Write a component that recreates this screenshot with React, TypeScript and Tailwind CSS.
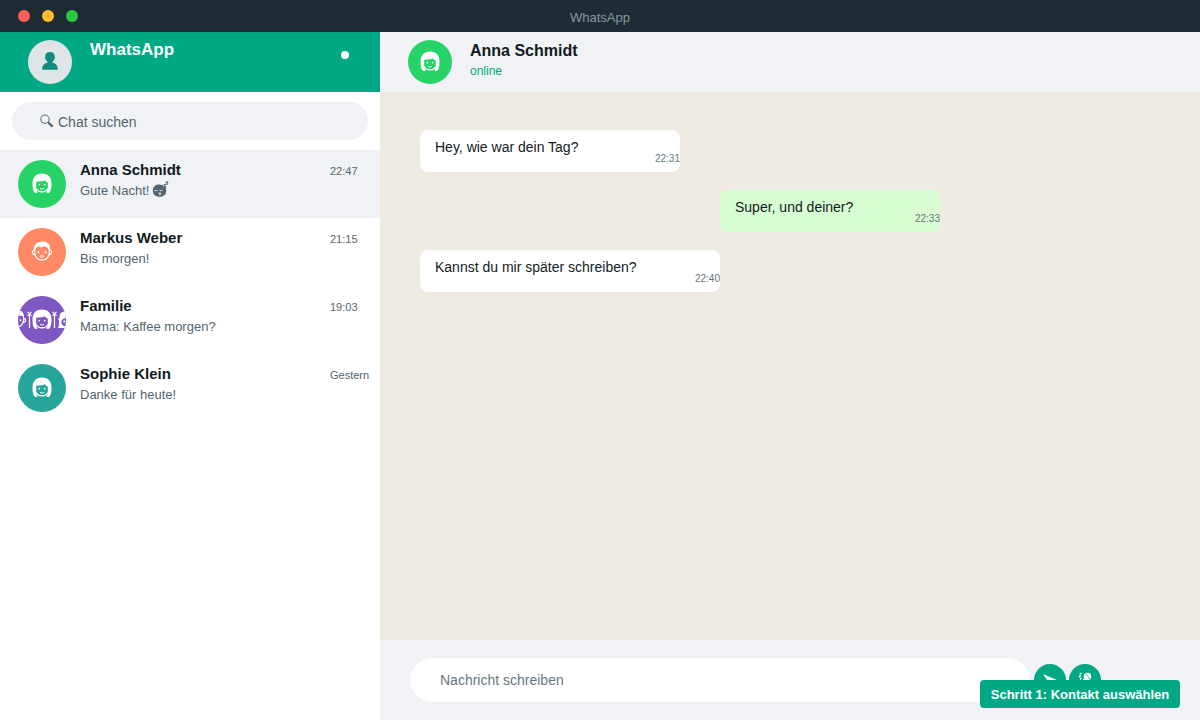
import { useState } from 'react';
import type { ReactNode } from 'react';

interface Chat {
  id: string;
  name: string;
  preview: string;
  time: string;
  color: string;
  face: 'woman' | 'man' | 'family';
  asleep?: boolean;
}

interface Message {
  id: number;
  text: string;
  time: string;
  style: string;
}

const CHATS: Chat[] = [
  { id: 'anna', name: 'Anna Schmidt', preview: 'Gute Nacht!', time: '22:47', color: 'bg-[#25d366]', face: 'woman', asleep: true },
  { id: 'markus', name: 'Markus Weber', preview: 'Bis morgen!', time: '21:15', color: 'bg-[#ff8a65]', face: 'man' },
  { id: 'familie', name: 'Familie', preview: 'Mama: Kaffee morgen?', time: '19:03', color: 'bg-[#7e57c2]', face: 'family' },
  { id: 'sophie', name: 'Sophie Klein', preview: 'Danke für heute!', time: 'Gestern', color: 'bg-[#26a69a]', face: 'woman' },
];

const MESSAGES: Message[] = [
  { id: 1, text: 'Hey, wie war dein Tag?', time: '22:31', style: 'w-[260px] self-start bg-white' },
  { id: 2, text: 'Super, und deiner?', time: '22:33', style: 'w-[220px] self-end bg-[#d9fdd3]' },
  { id: 3, text: 'Kannst du mir später schreiben?', time: '22:40', style: 'w-[300px] self-start bg-white' },
];

// Faces share a 48x48 canvas, the head is centred on 24,24
function WomanShape() {
  return (
    <>
      <path
        fill="currentColor"
        d="M17 33c-1.700-1.500-2.500-4.800-2.500-9 0-6.500 3.300-10.500 9.500-10.500s9.500 4 9.500 10.500c0 4.200-.8 7.500-2.500 9l-2.800-.3c1-1 1.600-3 1.600-5.700v-4.200c-1.400-.4-2.200-1.200-2.600-2.500-2.200 1-5.400 1.400-9 1.500V27c0 2.700.6 4.700 1.600 5.700z"
      />
      <path d="M18.300 28.500c.8 2.400 2.800 3.400 5.700 3.400s4.900-1 5.700-3.400" fill="none" stroke="currentColor" strokeWidth="1.100" />
      <circle cx="21.300" cy="24.600" r="0.900" fill="currentColor" />
      <circle cx="26.700" cy="24.600" r="0.900" fill="currentColor" />
      <path d="M22 28.500q2 1.200 4 0" fill="none" stroke="currentColor" strokeWidth="1" />
    </>
  );
}

function ManShape() {
  return (
    <>
      <path
        fill="currentColor"
        d="M16 24c-1.400-6 1.600-10.300 7.800-10.300 4.800-1.100 9.400 2 8.300 10.300l-1.500-1.500-.9-3c-1.600-.1-2.600-.6-3.400-1.500-1.300 1.200-2.800 1.600-4.400 1.400l.9-1.300c-2.800.3-4.900 1.600-5.300 4z"
      />
      <path
        d="M16.800 23.500c0 5.500 2.800 8.500 7.200 8.500s7.200-3 7.200-8.500M16.500 22.500c-1.500-.3-2.300.8-2 2.200.3 1.500 1.400 2.400 3 2.200M31.500 22.500c1.500-.3 2.300.8 2 2.200-.3 1.500-1.400 2.400-3 2.200"
        fill="none"
        stroke="currentColor"
        strokeWidth="1.100"
      />
      <circle cx="20.500" cy="24" r="1" fill="currentColor" />
      <circle cx="27.500" cy="24" r="1" fill="currentColor" />
      <ellipse cx="24" cy="28.200" rx="1.700" ry="1.100" fill="none" stroke="currentColor" strokeWidth="0.900" />
    </>
  );
}

function JoinerShape() {
  return <path d="M0 18.500V32M-2 15.800l4 4M2 15.800l-4 4" fill="none" stroke="currentColor" strokeWidth="1.200" />;
}

function FamilyShape() {
  return (
    <>
      {/* left neighbour, cut off by the circle */}
      <path fill="currentColor" d="M0 15h3.200c2.300 1.600 3.200 4 2.600 7L4.500 20 0 19.500z" />
      <path
        d="M5.500 21c.8 4.700-1.300 9.300-5.500 10.300M5.800 22.300c2-.2 2.700 4-.3 4"
        fill="none"
        stroke="currentColor"
        strokeWidth="1.200"
      />
      <circle cx="2.500" cy="24.300" r="1" fill="currentColor" />
      <g transform="translate(11.500 0)">
        <JoinerShape />
      </g>
      <WomanShape />
      <g transform="translate(36.500 0)">
        <JoinerShape />
      </g>
      <path
        fill="currentColor"
        d="M48 15.500c-4-.4-7 2-6.300 5.700l-.7 1.300-1.200.3 1.300 1.600c-.3 3 .3 5.200-1.100 7.600h8v-1.600c-3 0-4.700-2-4.700-4.400 0-2.200 1.700-3.800 4.700-4z"
      />
      <circle cx="46.300" cy="25.500" r="1.100" fill="currentColor" />
    </>
  );
}

function Face({ face }: { face: Chat['face'] }) {
  return (
    <svg viewBox="0 0 48 48" className="size-12 shrink-0 text-white" aria-hidden="true">
      {face === 'woman' && <WomanShape />}
      {face === 'man' && <ManShape />}
      {face === 'family' && <FamilyShape />}
    </svg>
  );
}

function SleepingFace() {
  return (
    <svg viewBox="0 0 17 18" className="h-[18px] w-[17px]" aria-label="schlafend" role="img">
      <path
        fill="currentColor"
        fillRule="evenodd"
        d="M7.500 3.500C3.500 3.300.8 5.700.8 9.500c0 3.900 2.500 6.300 6.500 6.300s6.900-2 6.900-6c0-2-.3-3.500-1.200-4.700L11.800 6l-.9-1.800zM2.500 8.800q1.300 1.200 2.700 0l.4.500q-1.800 1.700-3.500 0zM7.700 8.800q1.300 1.200 2.700 0l.4.500q-1.800 1.700-3.500 0zM5.800 11.800h3c.4 1.200-.2 2.600-1.400 2.600l.2-1.500z"
      />
      <path d="M11.300 3.800l2-.5-1 2.500 1.800-.5M13.500 1.300l2.300-.6-1.400 2.700 2-.5" fill="none" stroke="currentColor" strokeWidth="1" />
    </svg>
  );
}

function SearchGlyph() {
  return (
    <svg viewBox="0 0 14 14" className="size-[14px] shrink-0" fill="none" stroke="currentColor" aria-hidden="true">
      <circle cx="5" cy="5.200" r="4.200" strokeWidth="1" />
      <path d="M8 8.200l1.200 1.200" strokeWidth="1.200" />
      <path d="M9.200 9.400l2.900 2.700" strokeWidth="2.200" strokeLinecap="round" />
    </svg>
  );
}

function UserGlyph() {
  return (
    <svg viewBox="0 0 16 20" className="h-5 w-4 text-[#128c7e]" fill="currentColor" aria-hidden="true">
      <path d="M8 0C5 0 3.300 1.600 3.300 4.200c0 .6-.3.900-.3 1.500 0 .7.500 1 .8 1.700.4 1 .9 1.700 1.700 2.300v.9C3 11.800.2 12.300.2 17.700h15.600c0-5.400-2.800-5.900-5.300-7.100v-.9c.8-.6 1.300-1.300 1.700-2.300.3-.7.8-1 .8-1.700 0-.6-.3-.9-.3-1.500C12.700 1.600 11 0 8 0z" />
    </svg>
  );
}

function RoundButton({ label, children }: { label: string; children: ReactNode }) {
  return (
    <button
      type="button"
      aria-label={label}
      className="flex size-8 shrink-0 items-center justify-center rounded-full bg-[#00a884] text-white"
    >
      {children}
    </button>
  );
}

function Sidebar({ activeId, onSelect }: { activeId: string; onSelect: (id: string) => void }) {
  return (
    <aside className="flex w-[380px] shrink-0 flex-col bg-white">
      <header className="flex h-[60px] shrink-0 items-center bg-[#00a884] pr-[31px] pl-7">
        <div className="flex size-11 items-center justify-center rounded-full bg-[#dfe5e7]">
          <UserGlyph />
        </div>
        <h1 className="mb-6 ml-[18px] flex-1 text-[17px] leading-5 font-bold text-white">WhatsApp</h1>
        <button type="button" aria-label="Menü" className="mb-3.5 size-2 rounded-full bg-white" />
      </header>

      <label className="mx-3 my-2.5 flex h-[38px] shrink-0 items-center gap-1 rounded-full bg-[#f0f2f5] pr-4 pl-7 text-[#54656f]">
        <SearchGlyph />
        <input
          type="search"
          aria-label="Chat suchen"
          placeholder="Chat suchen"
          className="h-6 min-w-0 flex-1 bg-transparent pt-0.5 text-sm outline-none placeholder:text-[#54656f]"
        />
      </label>

      <nav className="flex flex-col">
        {CHATS.map(chat => (
          <button
            key={chat.id}
            type="button"
            onClick={() => onSelect(chat.id)}
            className={`flex h-[68px] items-center pl-[18px] text-left ${chat.id === activeId ? 'bg-[#f0f2f5]' : 'bg-white'}`}
          >
            <span className={`flex size-12 shrink-0 overflow-hidden rounded-full ${chat.color}`}>
              <Face face={chat.face} />
            </span>
            <span className="mb-2 ml-[14px] flex min-w-0 flex-1 flex-col">
              <span className="text-[15px] leading-5 font-bold text-[#111b21]">{chat.name}</span>
              <span className="flex h-5 items-center gap-[3px] text-[13px] leading-5 text-[#54656f]">
                <span className="pt-0.5">{chat.preview}</span>
                {chat.asleep && <SleepingFace />}
              </span>
            </span>
            <span className="mb-[26px] w-[50px] text-[11px] leading-4 text-[#54656f]">{chat.time}</span>
          </button>
        ))}
      </nav>
    </aside>
  );
}

function Conversation({ chat }: { chat: Chat }) {
  return (
    <main className="flex min-w-0 flex-1 flex-col bg-[#efeae2]">
      <header className="flex h-[60px] shrink-0 items-center bg-[#f0f2f5] pl-7">
        <div className={`flex size-11 items-center justify-center overflow-hidden rounded-full ${chat.color}`}>
          <Face face={chat.face} />
        </div>
        <div className="mb-[3px] ml-[18px]">
          <h2 className="text-base leading-5 font-bold text-[#111b21]">{chat.name}</h2>
          <p className="text-xs leading-5 text-[#00a884]">online</p>
        </div>
      </header>

      <section className="flex flex-1 flex-col gap-[18px] pt-[38px] pr-[260px] pl-10">
        {MESSAGES.map(msg => (
          <div key={msg.id} className={`flex min-h-[42px] items-start rounded-[8px] pl-[15px] ${msg.style}`}>
            <p className="flex-1 pt-[7px] text-sm leading-5 text-[#111b21]">{msg.text}</p>
            <time className="mt-[23px] text-[10px] leading-3 text-[#667781]">{msg.time}</time>
          </div>
        ))}
      </section>

      <footer className="flex h-20 shrink-0 items-center bg-[#f0f2f5] pr-[99px] pl-[30px]">
        <input
          type="text"
          aria-label="Nachricht schreiben"
          placeholder="Nachricht schreiben"
          className="mr-1 h-11 min-w-0 flex-1 rounded-full bg-white px-[30px] text-sm outline-none placeholder:text-[#667781]"
        />
        <div className="flex gap-[3px]">
          <RoundButton label="Senden">
            <svg viewBox="0 0 14 12" className="h-3 w-[14px]" fill="currentColor" aria-hidden="true">
              <path d="M0 0l14 6-14 6 4-6z" />
            </svg>
          </RoundButton>
          <RoundButton label="Sprachnachricht">
            <svg viewBox="0 0 16 16" className="size-4" aria-hidden="true">
              <circle cx="10.500" cy="4.500" r="3.800" fill="currentColor" />
              <path d="M8.300 1.500l4.800 5.500" stroke="#00a884" strokeWidth="0.800" />
              <path d="M6.800 6.200L9.200 8.500 3.500 14.500 2 13.500z" fill="currentColor" />
              <path d="M3.200 4.500V1l2 .8M3.500 8.700V5.800l1.500.8" stroke="currentColor" strokeWidth="0.900" fill="none" />
              <circle cx="2.600" cy="4.500" r="0.900" fill="currentColor" />
            </svg>
          </RoundButton>
        </div>
      </footer>
    </main>
  );
}

export default function App() {
  const [activeId, setActiveId] = useState('anna');
  const active = CHATS.find(c => c.id === activeId) ?? CHATS[0];

  return (
    <div className="relative flex h-screen flex-col overflow-hidden font-['Liberation_Sans',Arial,sans-serif]">
      {/* Window title bar */}
      <div className="grid h-8 shrink-0 grid-cols-[1fr_auto_1fr] items-center bg-[#202c33]">
        <div className="flex gap-3 pl-[18px]">
          <span className="size-3 rounded-full bg-[#ff5f57]" />
          <span className="size-3 rounded-full bg-[#febc2e]" />
          <span className="size-3 rounded-full bg-[#28c840]" />
        </div>
        <span className="pt-1 text-[13px] leading-5 text-[#8696a0]">WhatsApp</span>
      </div>

      <div className="flex min-h-0 flex-1">
        <Sidebar activeId={activeId} onSelect={setActiveId} />
        <Conversation chat={active} />
      </div>

      {/* Tutorial step hint */}
      <div
        role="status"
        className="absolute right-5 bottom-3 flex h-7 w-[200px] items-center justify-center rounded bg-[#00a884] pt-0.5 text-[13px] font-bold text-white"
      >
        Schritt 1: Kontakt auswählen
      </div>
    </div>
  );
}
